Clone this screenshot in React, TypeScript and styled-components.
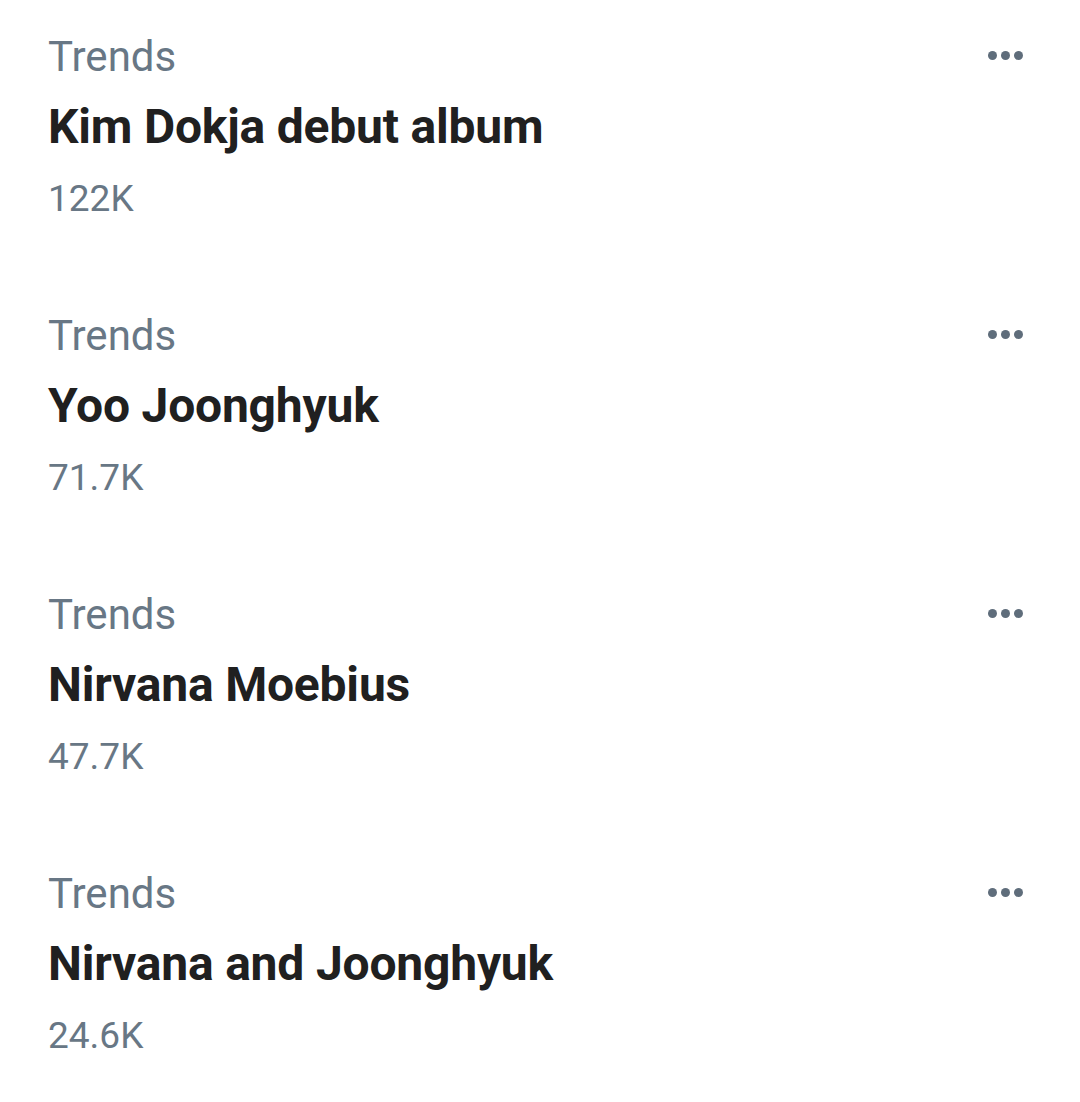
import styled, { createGlobalStyle } from 'styled-components';

const GlobalStyle = createGlobalStyle`
  html, body {
    margin: 0;
    padding: 0;
    background: #ffffff;
  }
  body {
    font-family: Roboto, 'Noto Sans', 'Liberation Sans', sans-serif;
  }
`;

const List = styled.div`
  display: flex;
  flex-direction: column;
  width: 1080px;
`;

const Item = styled.div`
  display: flex;
  justify-content: space-between;
  align-items: flex-start;
  padding: 22px 57px 47px 48px;
`;

const Info = styled.div`
  display: flex;
  flex-direction: column;
`;

const Label = styled.span`
  font-size: 42px;
  line-height: 70px;
  color: #687785;
`;

const Title = styled.span`
  font-size: 48px;
  line-height: 70px;
  font-weight: 700;
  letter-spacing: -0.2px;
  color: #202020;
`;

const Count = styled.span`
  font-size: 37px;
  line-height: 70px;
  padding-top: 2px;
  margin-bottom: -2px;
  color: #687785;
`;

const MoreButton = styled.button`
  display: flex;
  gap: 4px;
  align-items: center;
  margin-top: 29px;
  padding: 0;
  border: none;
  background: none;
  cursor: pointer;
`;

const Dot = styled.span`
  width: 9px;
  height: 9px;
  border-radius: 50%;
  background: #5f6d7b;
`;

interface Trend {
  title: string;
  count: string;
}

const trends: Trend[] = [
  { title: 'Kim Dokja debut album', count: '122K' },
  { title: 'Yoo Joonghyuk', count: '71.7K' },
  { title: 'Nirvana Moebius', count: '47.7K' },
  { title: 'Nirvana and Joonghyuk', count: '24.6K' },
];

export default function App() {
  return (
    <>
      <GlobalStyle />
      <List>
        {trends.map((t) => (
          <Item key={t.title}>
            <Info>
              <Label>Trends</Label>
              <Title>{t.title}</Title>
              <Count>{t.count}</Count>
            </Info>
            <MoreButton aria-label="More">
              <Dot />
              <Dot />
              <Dot />
            </MoreButton>
          </Item>
        ))}
      </List>
    </>
  );
}
